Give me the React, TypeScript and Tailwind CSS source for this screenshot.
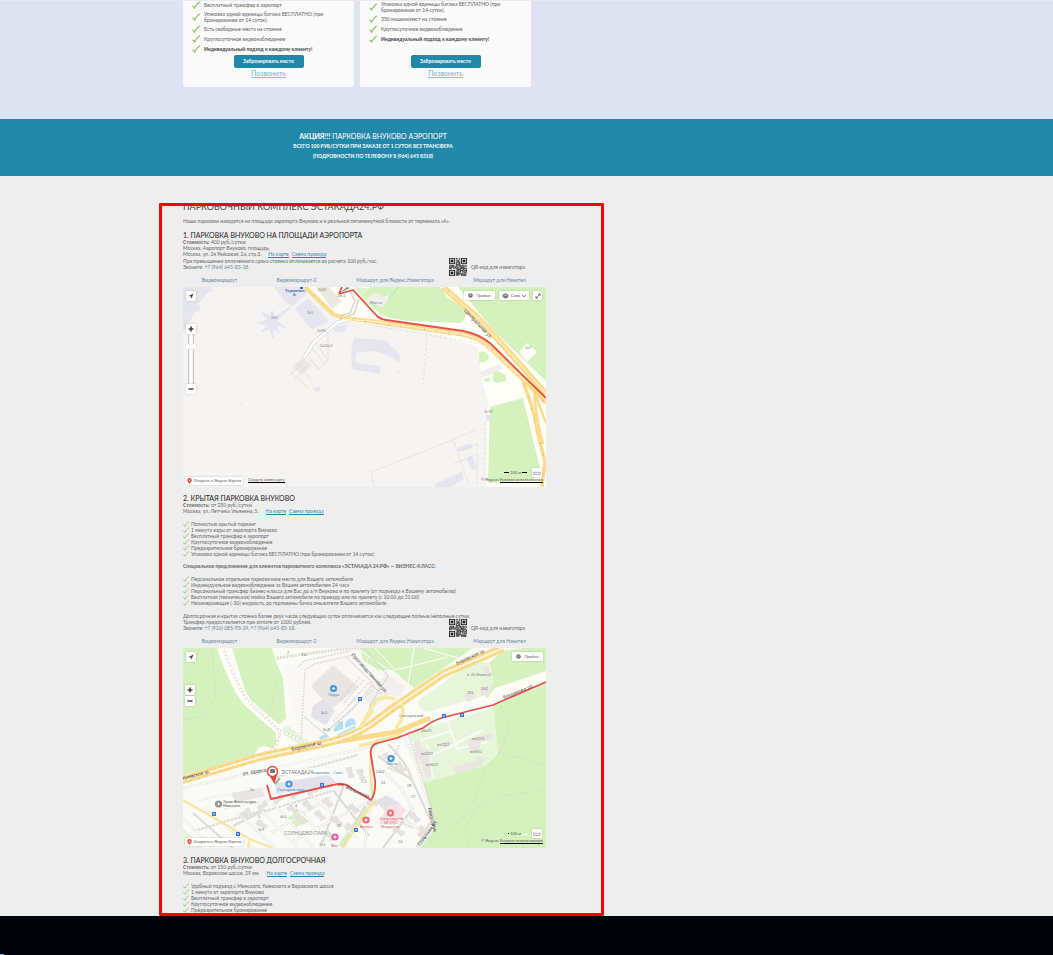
import type { ReactNode } from "react";

function Check({ small = false }: { small?: boolean }) {
  return (
    <svg viewBox="0 0 10 10" className={small ? "size-[6px] shrink-0" : "size-2 shrink-0"} aria-hidden="true">
      <path d="M1 6.4c1 .3 1.8 1.200 2.300 2.400C4.800 5.500 6.800 3 9.400 1.300" fill="none" stroke="#8cc05a" strokeWidth="1.400" strokeLinecap="round" />
    </svg>
  );
}

function CheckList({ items }: { items: string[] }) {
  return (
    <ul>
      {items.map((item) => (
        <li key={item} className="flex items-center gap-[2px]">
          <Check small />
          <span className="whitespace-nowrap">{item}</span>
        </li>
      ))}
    </ul>
  );
}

type Feature = { text: string; bold?: boolean };

function ParkingCard({ features }: { features: Feature[] }) {
  return (
    <article className="flex w-[171px] flex-col items-center rounded-b-xs bg-[#fafafa] px-[9px] pb-[9px]">
      <ul className="h-[54px] w-full space-y-[2px] text-[5px] leading-[6px] text-[#606060]">
        {features.map((f) => (
          <li key={f.text} className="flex items-center gap-[4px]">
            <Check />
            <span className={f.bold ? "font-bold text-[#444]" : ""}>{f.text}</span>
          </li>
        ))}
      </ul>
      <button type="button" className="h-[13px] w-[70px] rounded-xs bg-[#2188aa] text-[5px] leading-none font-bold text-white">
        Забронировать место
      </button>
      <a href="#call" className="mt-[2px] border-b border-[#7cc8ec] text-[7px] leading-[7px] text-[#62b8e2]">
        Позвонить
      </a>
    </article>
  );
}

function QrCode() {
  const n = 21;
  const cells: ReactNode[] = [];
  const finder = (x: number, y: number) => (x < 8 && y < 8) || (x > 12 && y < 8) || (x < 8 && y > 12);
  for (let y = 0; y < n; y++) {
    for (let x = 0; x < n; x++) {
      if (!finder(x, y) && (x * 7 + y * 13 + x * y * 3 + ((x ^ y) % 5)) % 9 < 6) {
        cells.push(<rect key={`${x}-${y}`} x={x} y={y} width="1" height="1" />);
      }
    }
  }
  return (
    <svg viewBox="0 0 21 21" className="size-[18px] bg-[#ddd]" fill="#1c1c1c" role="img" aria-label="QR-код">
      {cells}
      {[[0, 0], [14, 0], [0, 14]].map(([x, y]) => (
        <g key={`${x}-${y}`}>
          <path d={`M${x} ${y}h7v7h-7zM${x + 1} ${y + 1}v5h5v-5z`} fillRule="evenodd" />
          <rect x={x + 2} y={y + 2} width="3" height="3" />
        </g>
      ))}
    </svg>
  );
}

function TextLink({ children }: { children: ReactNode }) {
  return (
    <a href="#map" className="border-b border-[#2188aa] text-[#4386a1]">
      {children}
    </a>
  );
}

function RouteLinks() {
  return (
    <nav className="mt-px mb-1 grid w-[363px] grid-cols-[73fr_81fr_116fr_93fr] text-center text-[#66859a]">
      {["Видеомаршрут", "Видеомаршрут-2", "Маршрут для Яндекс.Навигатора", "Маршрут для Навител"].map((t) => (
        <a key={t} href="#route" className="whitespace-nowrap">
          {t}
        </a>
      ))}
    </nav>
  );
}

function QrBlock({ children }: { children: ReactNode }) {
  return (
    <div className="flex h-[18px]">
      <div className="w-[266px] whitespace-nowrap">{children}</div>
      <div className="flex items-center gap-[4px] whitespace-nowrap">
        <QrCode />
        <span>QR-код для навигатора</span>
      </div>
    </div>
  );
}

function Heading({ children }: { children: ReactNode }) {
  return <h3 className="text-[7px] leading-[8px] text-[#222]">{children}</h3>;
}

function Address({ price, text }: { price: string; text: string }) {
  return (
    <>
      <p>
        <b>Стоимость:</b> {price}
      </p>
      <p className="flex gap-[3px]">
        <span className="mr-[4px]">{text}</span>
        <TextLink>На карте</TextLink>
        <TextLink>Схема проезда</TextLink>
      </p>
    </>
  );
}

const chip = "flex items-center justify-center rounded-[1px] bg-white text-[#555] shadow-[0_0_2px_rgba(0,0,0,0.25)]";

function LocateIcon() {
  return (
    <svg viewBox="0 0 10 10" className="size-[6px]" aria-hidden="true">
      <path d="M9 1 1 5l3.500 1L6 9z" fill="#444" />
    </svg>
  );
}

function TrafficIcon() {
  return (
    <svg viewBox="0 0 10 10" className="size-[5px]" aria-hidden="true">
      <circle cx="5" cy="5" r="4.500" fill="#666" />
      <path d="M5 1v4l3-1M2 5h2M3 8h4" stroke="#ddd" fill="none" />
    </svg>
  );
}

function MapFrame({ drawing, full }: { drawing: ReactNode; full?: boolean }) {
  return (
    <div className="relative h-[200px] w-[363px] overflow-hidden text-[4px] leading-none">
      {drawing}
      <div className="absolute inset-0 flex flex-col justify-between pt-[4px] pr-[3px] pb-[2px] pl-[2px]">
        <div className="flex justify-between">
          <div className="flex flex-col items-start gap-[23px]">
            <button type="button" aria-label="Моё местоположение" className={`${chip} ml-px size-[10px]`}>
              <LocateIcon />
            </button>
            <div className="flex flex-col items-center">
              <button type="button" aria-label="Приблизить" className={`${chip} size-[10px]`}>
                <svg viewBox="0 0 10 10" className="size-[10px]"><path d="M5 2.500v5M2.500 5h5" stroke="#444" strokeWidth="1.600" /></svg>
              </button>
              {full && (
                <svg viewBox="0 0 12 50" className="h-[50px] w-[12px]" aria-hidden="true">
                  <path d="M3.500 0v50M8.500 0v50" stroke="#c8c6c3" />
                  <path d="M6 0v50" stroke="#fff" strokeWidth="2" />
                  <rect x=".5" y="10" width="11" height="5" rx="1" fill="#fff" stroke="#ddd" strokeWidth=".5" />
                </svg>
              )}
              <button type="button" aria-label="Отдалить" className={full ? `${chip} size-[10px]` : `${chip} mt-px size-[10px]`}>
                <svg viewBox="0 0 10 10" className="size-[10px]"><path d="M2.500 5h5" stroke="#555" strokeWidth="1.600" /></svg>
              </button>
            </div>
          </div>
          <div className="flex items-start gap-[4px]">
            <button type="button" className={`${chip} h-[9px] w-[31px] gap-[3px]`}>
              <TrafficIcon />
              Пробки
            </button>
            {full && (
              <>
                <button type="button" className={`${chip} h-[9px] w-[30px] gap-[2px]`}>
                  <svg viewBox="0 0 10 10" className="size-[7px]"><path d="M1 4l4-2.500L9 4v3L5 9.500 1 7z" fill="#777" /><path d="M3 4.500l2-1 2 1-2 1z" fill="#fff" /></svg>
                  Слои
                  <svg viewBox="0 0 10 10" className="size-[4px]"><path d="M1 3l4 4 4-4" fill="none" stroke="#333" strokeWidth="2" /></svg>
                </button>
                <button type="button" aria-label="Развернуть" className={`${chip} mr-px size-[9px]`}>
                  <svg viewBox="0 0 10 10" className="size-[6px]"><path d="M2 8 8 2M5.500 1.500H8.500V4.500M1.500 5.500V8.500H4.500" fill="none" stroke="#333" strokeWidth="1.200" /></svg>
                </button>
              </>
            )}
          </div>
        </div>
        <div className="flex items-end justify-between">
          <div className="flex items-center gap-[5px]">
            <a href="#yandex" className={`${chip} h-[8px] w-[58px] gap-[2px]`}>
              <svg viewBox="0 0 10 12" className="h-[6px] w-[5px]"><path d="M5 12C4 9 .5 7.500.5 4.500a4.500 4.500 0 0 1 9 0C9.500 7.500 6 9 5 12z" fill="#f04438" /><circle cx="5" cy="4.500" r="1.500" fill="#fff" /></svg>
              Открыть в Яндекс.Картах
            </a>
            {full && <a href="#create" className="mb-[2px] border-b border-black text-[#555]">Создать свою карту</a>}
          </div>
          <div className="flex flex-col items-end gap-px pb-[2px] text-[#555]">
            <div className="flex items-center gap-[5px] pr-px">
              <span className="flex items-center gap-px">
                <i className={full ? "h-px w-[5px] bg-black" : "size-px bg-black"} />
                100 м
                <i className={full ? "h-px w-[5px] bg-black" : "h-[2px] w-[5px] border-r border-b border-white"} />
              </span>
              <button type="button" aria-label="Линейка" className={`${chip} h-[9px] w-[10px]`}>
                <svg viewBox="0 0 10 10" className="size-[8px]"><rect x="1" y="4" width="8" height="3" fill="none" stroke="#888" strokeWidth=".8" /></svg>
              </button>
            </div>
            <div className="flex gap-px whitespace-nowrap">
              <span>© Яндекс</span>
              <a href="#terms" className="border-b border-black">Условия использования</a>
            </div>
          </div>
        </div>
      </div>
    </div>
  );
}

function AirportMap() {
  return (
    <svg viewBox="0 0 363 200" className="size-full bg-[#f5f4f2] font-['Liberation_Sans',sans-serif]" fill="none" role="img" aria-label="Карта: Внуково">
      <path d="M122 0 155 33 240 43 295 60 299 93 305 116 302 200H363V0z" fill="#fffff7" />
      <g fill="#d5f2be">
        <path d="M187 0H257L264 10 283 22Q284 32 277 36L227 34Q200 31 195 25L178 10z" />
        <path d="M275 0H363V94L310 43z" />
        <path d="M307 120 340 111 350 153 357 180 350 193 305 196z" />
        <path d="M296 65Q304 63 306 71 302 77 296 75zM310 86l5-2 8 4v6l-9 2-4-2zM301 92l5-2 1 4-5 1z" />
        <path d="M172 0l12 1 5 14-5 4z" opacity=".8" />
      </g>
      <g fill="#e5e5ee">
        <path d="M0 0H28L30 4 24 6 15 17 18 23 12 25 6 36 0 45z" />
        <path d="M91 0H126L123 8 110 19 102 15 91 0z" />
        <path d="M110 18l-17 16 11 7-11-3 3 8-5-6-1 11-3-10-8 4 5-7-10-2 11-3-6-8 8 5 2-7 3 7z" stroke="#e5e5ee" />
        <path d="M112 22 125 11 146 34 129 43z" />
        <path d="M171 51l31 2 12 11 2 4 2 4-3 4-5-5-6-3-8-3-10-1-13 2v10l24 3v8l-28-5-1-17z" />
        <path d="M131 101l5-2 2 4-5 2zM56 117l3-1v2zM151 41q8-5 13-3-2 10-13 6zM274 161l13-5 3 5-14 4zM252 197l27-12 2 7-14 8h-15zM283 171l6-2 5 12-5 2zM303 128h5v6h-5zM244 70h3v1h-3zM214 85h3v1h-3z" />
      </g>
      <g fill="#ebe7e3">
        <path d="M133 0h13l13 14-10 8z" />
        <path d="M109 80l11-9 8 7-9 10z" />
        <path d="M297 85l19-8 3 5-20 9z" fill="#f0efed" />
        <path d="M182 15q11-15 17-5l9-2-8 12z" fill="#f1f0ed" />
        <path d="M336 65l8-9 10 9-10 10z" fill="#fffdf8" />
      </g>
      <g stroke="#dddcd9" strokeWidth=".8">
        <path d="M120 70l11-17 14 20-9 9-10-9m2-14 14 19m-18-10 12 13M107 84l18 17m-11-25 14 17m-21-4 13-14m-9 18 13-14M145 43v30" />
        <path d="M244 51l-4 47M187 38l107 18" strokeDasharray="3 2" />
        <path d="M302 135v65M257 33l23-10" strokeDasharray="3 2" />
        <path d="M205 12 216 0" stroke="#9bd8ee" />
        <path d="M155 29l12-3 5-12-5-10m-11 28 15-5 5-15" stroke="#d5d2cd" strokeWidth="1.400" />
        <path d="M121 71l10-16 24-20 11-2" stroke="#ccc9c6" strokeWidth="3.500" />
        <path d="M121 71l10-16 24-20 11-2" stroke="#fff" strokeWidth="2.500" />
      </g>
      <path d="M191 200 188 185 272 152 292 143M271 154l15 44M276 164l18-7v41M272 176l20-8" stroke="#d8d7d4" strokeDasharray="1.500 1.500" />
      <g stroke="#fbdc8e" strokeWidth="4.500">
        <path d="M122 0 150 27Q156 31 187 34L277 47Q297 50 307 61L344 96 363 116" />
        <path d="M260 0 294 30 327 66 363 107" strokeWidth="6" />
        <path d="M340 95Q352 125 354 143L362 175 359 200" strokeWidth="3.500" />
        <path d="M351 102q1 25 9 55M350 102l13 34" strokeWidth="2.500" />
      </g>
      <path d="M260 0 294 30 327 66 363 107M158 32l29 2 90 13q20 3 30 14l37 35" stroke="#fff5d8" />
      <path d="M122 0 155 31 277 47 307 61 363 116M265 4l98 104M342 98l20 77" stroke="#a3927a" strokeWidth=".8" strokeDasharray="1 11" />
      <path d="M156 7l3-7M156 7l14-4 24 26q3 3 9 4l77 11q16 3 28 13l55 54" stroke="#e94f43" strokeWidth="1.800" strokeLinejoin="round" />
      <path d="M157 6l7-6 3 1z" fill="#888" />
      <rect x="117" y="0" width="3" height="2" fill="#3467d1" />
      <g fill="#77777c" fontSize="4">
        <text x="102" y="5" fill="#4464b0" fontWeight="bold">Терминал</text>
        <text x="110" y="9" fill="#4464b0">А</text>
        <text x="88" y="32">2к2</text><text x="124" y="27">2к1</text><text x="135" y="4">2к11</text><text x="154" y="10">2вс1</text>
        <text x="134" y="45">2к99</text><text x="137" y="60">2к10с1</text><text x="187" y="17">Мосты</text><text x="342" y="62">1к7</text><text x="301" y="126">1с37</text>
        <text x="281" y="24" fontSize="5" fill="#333" transform="rotate(47 281 24)">Центральная ул.</text>
      </g>
    </svg>
  );
}

const houses = [
  [63, 165, -28], [80, 158, -28], [96, 151, -18], [113, 146, -12], [130, 143, -12], [145, 155, 60], [110, 162, 50], [125, 158, 60],
  [154, 174, 60], [168, 180, 40], [147, 188, 55], [118, 172, 50], [79, 177, 50], [205, 110, 60], [218, 120, 60], [216, 184, 50],
  [232, 170, 60], [238, 184, 120], [178, 127, 85], [167, 125, 85], [137, 168, 60], [171, 161, 55], [190, 155, 20],
];

function CityMap() {
  return (
    <svg viewBox="0 0 363 200" className="size-full bg-[#fcfcf6] font-['Liberation_Sans',sans-serif]" fill="none" role="img" aria-label="Карта: Солнцево">
      <path d="M100 20 118 13 165 0 187 0 240 38 185 70 148 86 118 92z" fill="#f9f8f4" />
      <path d="M0 132 180 95 188 150 240 130 252 180 237 200H0z" fill="#fafaf6" />
      <g fill="#d5f2be">
        <path d="M0 0H37L47 27Q58 52 75 65L93 78 97 86 92 103 84 106 75 99 78 108 0 127z" />
        <path d="M49 0H89L94 17 100 30 103 70 94 79Q73 64 62 42z" />
        <path d="M177 0H290L231 40 210 22 195 22 180 12z" />
        <path d="M320 3 340 0H363V23L312 40 304 50 300 43 310 30 306 15z" />
        <path d="M310 58 363 36V200H237L252 180 240 134 304 117 315 105z" />
      </g>
      <g fill="#e7f5da">
        <path d="M227 84 310 60 315 104 304 117 242 135z" />
        <path d="M247 45 290 13 305 15 311 35 303 47 245 64Q231 60 237 51z" />
        <path d="M94 82l27 18 5-6-22-17zM0 180l20 20H0z" />
        <path d="M155 197l27-39 5 3-26 39zM105 169l15-6 6 11-13 5z" fill="#d9f0c6" />
      </g>
      <path d="M318 40 363 24v9l-50 20-5-4z" fill="#fffcf3" />
      <g stroke="#fff" strokeWidth="2">
        <path d="M178 3 216 29M192 0l20 22 53-13M231 0 225 37M240 0l35 10" strokeWidth="1" />
        <path d="M38 0Q54 45 66 56L96 82Q99 93 96 105" stroke="#fffef6" strokeWidth="8" />
        <path d="M74 107q5-10 14-4l8 4" strokeWidth="5" stroke="#fffef6" />
        <path d="M40 0Q56 42 66 54L96 82 134 100M96 82Q99 93 87 104" stroke="#dad7d0" strokeWidth="2.500" />
        <path d="M40 0Q56 42 66 54L96 82 134 100M96 82Q99 93 87 104" stroke="#fff" strokeDasharray="3 1" />
        <path d="M94 10 166 0h14" stroke="#dedbd5" strokeWidth="3" strokeDasharray="2 1" />
        <path d="M115 19l6-6 46-10M118 92 122 22 131 16l40-9m-50 62 21 17 30-27" stroke="#dedbd6" strokeWidth="1.500" strokeDasharray="2 1" />
      </g>
      <g stroke="#dedcd6" strokeWidth="2.200">
        <path d="M15 152 90 139M40 160 88 153M63 169l86-26m-138 40 70-21M0 140l60-13 127-28M90 130l85-23" strokeDasharray="3 .8" />
        <path d="M90 155l41 45M77 161l38 39M105 153l50 47M131 148l42 42M150 142l36 46M54 165l39 35M20 160l50 40M10 165l40 35M0 170l30 30M88 185l60-36M50 178 82 162M110 193l77-40" />
        <path d="M160 140 138 197M182 158l-23 42M192 152l45 30M196 121q30 20 35 50M205 96q20 20 24 36l19 41-14 26M195 108l34 24M189 104v48l-8 48M221 90q15 25 29 85-4 10-15 24M200 200l30-40" />
        <path d="M225 84 252 170M216 97l-10 23 23 10M203 168l27 12" strokeDasharray="2 1" />
      </g>
      <g stroke="#fff" strokeWidth="1.200">
        <path d="M15 152 90 139M40 160 88 153M0 140l60-13 127-28M90 155l41 45M77 161l38 39M105 153l50 47M131 148l42 42M54 165l39 35M20 160l50 40M0 170l30 30M221 90q15 25 29 85l-15 24M189 104v48l-8 48M88 185l60-36M110 193l77-40M192 152l45 30M196 121q30 20 35 50" />
        <path d="M240 112l60-30M229 95l40-12m-5-12 10 30 30-7M250 130l-6-34" stroke="#fafbf4" strokeWidth="2" />
      </g>
      <g fill="#e9e5e2">
        <path d="M128 38 150 17 176 39 148 61z" />
        <path d="M92 135 146 127 155 136 93 146z" fill="#e3e2eb" />
        <path d="M130 58 140 51 152 63 143 77 128 69z" fill="#e3e2eb" />
        <path d="M180 43 205 26 221 38 220 48 205 47 188 62z" fill="#f1f0ef" />
        <path d="M193 153 203 147 218 156 205 167z" fill="#e2e1ea" />
        <path d="M204 158 216 156 223 162 212 177 196 176z" fill="#f8e1e5" />
        <path d="M49 145l29-5 4 8-30 7z" />
        <path d="M281 47l8-4 4 7-8 4zM297 41l8-4 3 8-9 3zM300 20l5-3 3 10-5 2z" />
        <path d="M231 93l5-2 3 12 7-2 2 27-5 2-5-18-5-2zM286 91l23-6 2 5-13 4-3 9-7 3-2-7zM270 119l23-6 2-5 7 2-3 8-26 8zM260 95l6-3 3 4-7 4z" />
      </g>
      {houses.map(([x, y, a]) => (
        <path key={`${x}-${y}`} d="M-6-2.500H1V-4H5V2H-1V4H-6z" fill="#e5e1dd" transform={`translate(${x} ${y}) rotate(${a})`} />
      ))}
      <g stroke="#d1cfca" strokeWidth="1">
        <path d="M157 52l20-23M161 55l20-23M165 58l20-23M169 61l20-23M150 74l23-24M145 82l45-40" strokeDasharray="3 1" />
        <path d="M163 9 190 35M181 0l24 28-19 31" />
        <path d="M190 30l12 12M186 34l12 12" />
      </g>
      <g fill="#b5def5">
        <path d="M151 81q4-8 9-8v8l-9 3zM162 76q3-7 9-5l2 5-11 4zM155 86l18-9-1 3-18 8zM136 89l8-3 2 3-9 3z" />
      </g>
      <g stroke="#fbdb8b" strokeWidth="6.500">
        <path d="M0 132 77 109 147 94Q170 88 187 77L207 62 260 26 320 0" strokeWidth="8" />
        <path d="M140 96 213 84 247 70" strokeWidth="5" />
        <path d="M177 80 192 53Q200 47 212 51M177 80 190 62M213 80q12-15 3-28M176 98l43-11" stroke="#f7e8a6" strokeWidth="3.500" />
        <path d="M0 152 67 191 90 200M67 190 65 200M192 152 173 178 160 200M188 104q-2 25 2 46" stroke="#fae59e" strokeWidth="2.200" />
      </g>
      <path d="M0 132 77 109 147 94Q170 88 187 77L207 62 260 26 320 0" stroke="#fffaf0" strokeWidth="1.500" />
      <path d="M0 130 77 107 147 92Q170 86 187 75L207 60 260 24 320-2M0 135l77-23 70-15q25-6 40-17l73-51" stroke="#b29a6c" strokeWidth=".6" strokeDasharray="1 7" />
      <g stroke="#c5dcb6" strokeWidth=".7" strokeDasharray="3 2">
        <path d="M0 72 20 68 33 48 29 0M17 0 5 30M85 70l10-40M318 58l8 20-9 28q-17 10-22 35t-32 42l-13 5M315 104l48 13M290 161l28-13 45-6M287 200l-5-18 8-18" />
      </g>
      <path d="M84 137 88 151 150 137Q162 134 168 140L188 152Q193 145 192 132L188 108Q186 97 195 95L214 90 240 80Q250 72 262 69L310 57 363 34" stroke="#e75047" strokeWidth="1.800" strokeLinejoin="round" />
      <path d="M92 136l5-6" stroke="#aaa" strokeWidth="2" />
      <path d="M86 127 91.500 136 94 127z" fill="#df4b43" />
      <circle cx="89.500" cy="123.500" r="5" fill="#fff" stroke="#df4b43" strokeWidth="1.500" />
      <rect x="87" y="121" width="5" height="4" rx="1" fill="#777" />
      {[[150.500, 40.500, "#4297e5"], [106, 136, "#4297e5"], [208, 110.500, "#4297e5"], [207.500, 165, "#ee6d70"], [183, 172, "#ee6d70"], [152, 189, "#e75fa0"], [35.500, 156, "#929296"]].map(([x, y, c]) => (
        <g key={`${x}-${y}`}>
          <circle cx={x} cy={y} r="3.600" fill={String(c)} />
          <path d={`M${Number(x) - 1.500} ${y}h3m-1.500-1.500v3`} stroke="#fff" strokeWidth="1.200" />
        </g>
      ))}
      {[[175, 49], [29, 164], [53, 184], [137, 135], [171, 180], [259, 66], [277, 65]].map(([x, y]) => (
        <g key={`${x}-${y}`}>
          <rect x={x} y={y} width="4" height="4" rx=".5" fill="#3570d8" />
          <path d={`M${x + 1} ${y + 2}h2`} stroke="#fff" strokeWidth="1.200" />
        </g>
      ))}
      <rect x="97" y="120" width="56" height="7" rx="1" fill="#fff" opacity=".85" />
      <g fontSize="4" fill="#77777a">
        <text x="98" y="125.500" fontSize="5">ЭСТАКАДА24</text>
        <text x="130" y="125.500" fill="#4b79b5">парковка</text><text x="150" y="126" fill="#3978d2">Солн.</text>
        <text x="145" y="48" fill="#3689da">Леруа</text><text x="94" y="143" fill="#3689da">Солнцево парк</text><text x="203" y="117" fill="#3689da">Лента</text>
        <text x="40" y="155" fill="#555">Храм Александра</text><text x="40" y="159" fill="#555">Невского</text>
        <text x="101" y="187" fontSize="5" fill="#92928f">СОЛНЦЕВО-ПАРК</text>
        <text x="197" y="172" fill="#e16770">Больница №</text><text x="201" y="176" fill="#e16770">МГУПС</text><text x="198" y="180" fill="#e16770">Медцентр</text>
        <text x="177" y="180" fill="#e16770">Аптека</text><text x="148" y="199" fill="#d7488e">Мы</text>
        <text x="138" y="66">4с1</text><text x="140" y="83">4с2</text><text x="67" y="143">5к</text><text x="104" y="6">2</text><text x="118" y="8">25с</text>
        <text x="284" y="28">к. 20 Ново-с2</text><text x="284" y="46">201</text><text x="298" y="42">202</text><text x="216" y="69">Солнцевский</text><text x="238" y="84">56к25</text>
        <text x="254" y="98">вл22/2</text><text x="289" y="92">вл22/1</text><text x="287" y="105">вл16/1</text><text x="238" y="107">вл22/2</text><text x="243" y="118">вл30/2</text>
        <text x="193" y="125">54к2</text><text x="198" y="136">44</text><text x="224" y="139">28</text><text x="228" y="150">27</text><text x="178" y="135">7-1</text><text x="215" y="195">24</text><text x="75" y="170">5</text><text x="112" y="159">4</text><text x="97" y="170">4с1</text><text x="75" y="183">3к1</text><text x="154" y="179">11</text><text x="136" y="198">1с1</text>
      </g>
      <g fontSize="5" fill="#444">
        <text x="109" y="103" transform="rotate(-13 109 103)">Боровское ш.</text>
        <text x="0" y="132" transform="rotate(-15 0 132)">Киевское ш.</text>
        <text x="274" y="17" transform="rotate(-25 274 17)">Боровское ш.</text>
        <text x="168" y="7" transform="rotate(48 168 7)">Производственная ул.</text>
        <text x="321" y="51" transform="rotate(-22 321 51)">Богданова ул.</text>
        <text x="60" y="127" transform="rotate(-8 60 127)">ул. Щорса</text>
        <text x="155" y="137" transform="rotate(24 155 137)">ул. Волынская</text>
        <text x="245" y="160" transform="rotate(77 245 160)">Авиаторов</text>
        <text x="237" y="198" transform="rotate(-54 237 198)">Попутная ул.</text>
      </g>
    </svg>
  );
}

export default function App() {
  return (
    <div className="flex min-h-screen flex-col bg-[#000307] font-['Lato','Noto_Sans',sans-serif]">
      <section className="border-t border-[#e9eaf0] bg-[#dee3f1] px-4 pb-8">
        <div className="mx-auto flex max-w-[687px] gap-[6px]">
          <ParkingCard
            features={[
              { text: "Бесплатный трансфер в аэропорт" },
              { text: "Упаковка одной единицы багажа БЕСПЛАТНО (при бронировании от 14 суток)." },
              { text: "Есть свободные места на стоянке" },
              { text: "Круглосуточное видеонаблюдение" },
              { text: "Индивидуальный подход к каждому клиенту!", bold: true },
            ]}
          />
          <ParkingCard
            features={[
              { text: "Упаковка одной единицы багажа БЕСПЛАТНО (при бронировании от 14 суток)." },
              { text: "350 машиномест на стоянке" },
              { text: "Круглосуточное видеонаблюдение" },
              { text: "Индивидуальный подход к каждому клиенту!", bold: true },
            ]}
          />
        </div>
      </section>

      <section className="bg-[#2188aa] px-4 pt-3 pb-[15px] text-white">
        <div className="mx-auto max-w-[687px]">
          <div className="w-[380px] text-center text-[5px] leading-[10px] font-bold">
            <h2 className="text-[7px] font-normal">
              <b>АКЦИЯ!!!</b> ПАРКОВКА ВНУКОВО АЭРОПОРТ
            </h2>
            <p>ВСЕГО 100 РУБ/СУТКИ ПРИ ЗАКАЗЕ ОТ 1 СУТОК БЕЗ ТРАНСФЕРА</p>
            <p>(ПОДРОБНОСТИ ПО ТЕЛЕФОНУ 8 (964) 645 8318)</p>
          </div>
        </div>
      </section>

      <main className="bg-[#eee] px-4 pt-[27px]">
        <div className="mx-auto max-w-[687px]">
          <div className="-ml-6 max-w-[445px] overflow-hidden rounded-[1px] border-[3px] border-[#fe0000] pl-[21px] text-[5px] leading-[6px] text-[#666]">
            <h1 className="-mt-1 mb-[6px] text-[9px] leading-[10px] text-[#444]">ПАРКОВОЧНЫЙ КОМПЛЕКС ЭСТАКАДА24.РФ</h1>
            <p className="mb-[7px]">Наши парковки находятся на площади аэропорта Внуково и в реальной пятиминутной близости от терминала «А».</p>

            <section>
              <Heading>1. ПАРКОВКА ВНУКОВО НА ПЛОЩАДИ АЭРОПОРТА</Heading>
              <p><b>Стоимость:</b> 400 руб./сутки.</p>
              <p>Москва, Аэропорт Внуково, площадь.</p>
              <p className="flex gap-[3px]">
                <span className="mr-[4px]">Москва, ул. 2я Рейсовая, 2а, стр.3.</span>
                <TextLink>На карте</TextLink>
                <TextLink>Схема проезда</TextLink>
              </p>
              <QrBlock>
                <p>При превышении оплаченного срока стоянка оплачивается из расчета 100 руб./час.</p>
                <p>Звоните: <a href="tel:+79646458318" className="text-[#66859a]">+7 (964) 645-83-18</a>.</p>
              </QrBlock>
              <RouteLinks />
              <MapFrame drawing={<AirportMap />} full />
            </section>

            <section className="mt-[7px]">
              <Heading>2. КРЫТАЯ ПАРКОВКА ВНУКОВО</Heading>
              <Address price="от 250 руб./сутки" text="Москва, ул. Летчика Ульянина, 5." />
              <div className="mt-[6px]">
                <CheckList
                  items={[
                    "Полностью крытый паркинг",
                    "1 минута езды от аэропорта Внуково",
                    "Бесплатный трансфер в аэропорт",
                    "Круглосуточное видеонаблюдение",
                    "Предварительное бронирование",
                    "Упаковка одной единицы багажа БЕСПЛАТНО (при бронировании от 14 суток)",
                  ]}
                />
              </div>
              <p className="mt-[6px] mb-[7px] font-bold">Специальное предложение для клиентов парковочного комплекса «ЭСТАКАДА 24.РФ» — БИЗНЕС-КЛАСС:</p>
              <CheckList
                items={[
                  "Персональное отдельное парковочное место для Вашего автомобиля",
                  "Индивидуальное видеонаблюдение за Вашим автомобилем 24 часа",
                  "Персональный трансфер бизнес-класса для Вас до а/п Внуково и по прилету (от подъезда к Вашему автомобилю)",
                  "Бесплатная (техническая) мойка Вашего автомобиля по приезду или по прилету (с 10:00 до 21:00)",
                  "Незамерзающая (-30) жидкость до горловины бачка омывателя Вашего автомобиля",
                ]}
              />
              <p className="mt-[7px]">Долгосрочная и крытая стоянка более двух часов следующих суток оплачивается как следующие полные/неполные сутки.</p>
              <QrBlock>
                <p>Трансфер предоставляется при оплате от 1000 рублей.</p>
                <p>
                  Звоните: <a href="tel:+79260859319" className="text-[#66859a]">+7 (926) 085-93-19</a>, <a href="tel:+79646458318" className="text-[#66859a]">+7 (964) 645-83-18</a>.
                </p>
              </QrBlock>
              <RouteLinks />
              <MapFrame drawing={<CityMap />} />
            </section>

            <section className="mt-2">
              <Heading>3. ПАРКОВКА ВНУКОВО ДОЛГОСРОЧНАЯ</Heading>
              <Address price="от 150 руб./сутки" text="Москва, Боровское шоссе, 29 км." />
              <div className="mt-[6px]">
                <CheckList
                  items={[
                    "Удобный подъезд с Минского, Киевского и Боровского шоссе",
                    "1 минута от аэропорта Внуково",
                    "Бесплатный трансфер в аэропорт",
                    "Круглосуточное видеонаблюдение",
                    "Предварительное бронирование",
                  ]}
                />
              </div>
            </section>
          </div>
        </div>
      </main>
      <footer className="flex flex-1 items-end">
        <div className="h-px w-1 bg-[#7fb5e6]" />
      </footer>
    </div>
  );
}
